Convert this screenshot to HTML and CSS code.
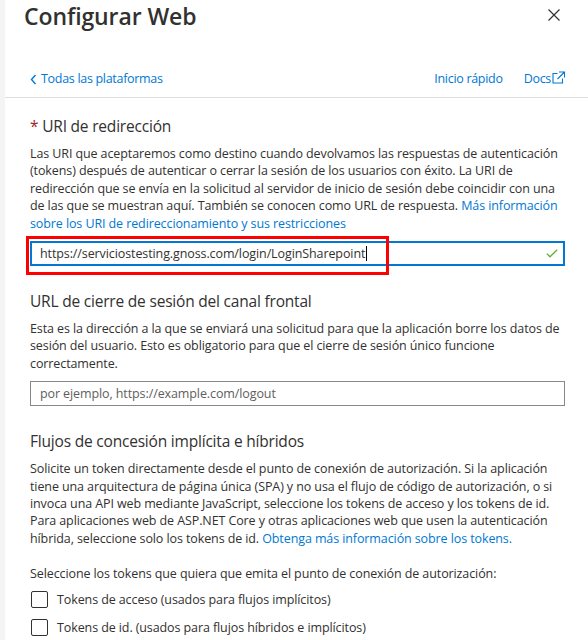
FILE: index.html
```html
<!DOCTYPE html>
<html lang="es">
<head>
<meta charset="utf-8">
<title>Configurar Web</title>
<link rel="stylesheet" href="styles.css">
</head>
<body>
<div class="panel">
  <header class="head">
    <div class="title-row">
      <h1 class="title">Configurar Web</h1>
      <button class="close" aria-label="Cerrar">
        <svg width="12" height="12" viewBox="0 0 12 12"><path d="M0.5 0.5 L11.5 11.5 M11.5 0.5 L0.5 11.5" stroke="#323130" stroke-width="1.2" fill="none"/></svg>
      </button>
    </div>
    <nav class="nav">
      <a class="back" href="#">
        <svg width="7" height="11" viewBox="0 0 7 11"><path d="M5.5 1 L1.5 5.5 L5.5 10" stroke="#0078d4" stroke-width="1.4" fill="none"/></svg>
        Todas las plataformas
      </a>
      <div class="nav-links">
        <a href="#">Inicio rápido</a>
        <a href="#" class="docs">Docs<svg width="14" height="13" viewBox="0 0 14 13"><path d="M5.5 2.5 H1 V12 H10.5 V7.5" stroke="#0078d4" stroke-width="1.1" fill="none"/><path d="M7 1 H12.5 V6.5 M12.5 1 L5.5 8" stroke="#0078d4" stroke-width="1.1" fill="none"/></svg></a>
      </div>
    </nav>
  </header>

  <main class="content">
    <section class="section first">
      <h2 class="heading"><span class="req">*</span> URI de redirección</h2>
      <p class="desc">Las URI que aceptaremos como destino cuando devolvamos las respuestas de autenticación (tokens) después de autenticar o cerrar la sesión de los usuarios con éxito. La URI de redirección que se envía en la solicitud al servidor de inicio de sesión debe coincidir con una de las que se muestran aquí. También se conocen como URL de respuesta. <a href="#">Más información sobre los URI de redireccionamiento y sus restricciones</a></p>
      <div class="field focused">
        <span class="value">https://serviciostesting.gnoss.com/login/LoginSharepoint<span class="caret"></span></span>
        <svg class="ok" width="12" height="9" viewBox="0 0 12 9"><path d="M0.8 4.6 L4 7.8 L11.2 0.8" stroke="#5db32a" stroke-width="1.3" fill="none"/></svg>
        <span class="highlight"></span>
      </div>
    </section>

    <section class="section">
      <h2 class="heading">URL de cierre de sesión del canal frontal</h2>
      <p class="desc">Esta es la dirección a la que se enviará una solicitud para que la aplicación borre los datos de sesión del usuario. Esto es obligatorio para que el cierre de sesión único funcione correctamente.</p>
      <div class="field">
        <span class="placeholder">por ejemplo, https://example.com/logout</span>
      </div>
    </section>

    <section class="section">
      <h2 class="heading">Flujos de concesión implícita e híbridos</h2>
      <p class="desc">Solicite un token directamente desde el punto de conexión de autorización. Si la aplicación tiene una arquitectura de página única (SPA) y no usa el flujo de código de autorización, o si invoca una API web mediante JavaScript, seleccione los tokens de acceso y los tokens de id. Para aplicaciones web de ASP.NET Core y otras aplicaciones web que usen la autenticación híbrida, seleccione solo los tokens de id. <a href="#">Obtenga más información sobre los tokens.</a></p>
      <p class="desc select">Seleccione los tokens que quiera que emita el punto de conexión de autorización:</p>
      <label class="check"><span class="box"></span>Tokens de acceso (usados para flujos implícitos)</label>
      <label class="check"><span class="box"></span>Tokens de id. (usados para flujos híbridos e implícitos)</label>
    </section>
  </main>
</div>
</body>
</html>
```

FILE: styles.css
```css
* { box-sizing: border-box; }
html, body { margin: 0; padding: 0; background: #fff; }
body {
  font-family: "Open Sans", "Noto Sans", sans-serif;
  color: #323130;
  width: 588px;
  height: 640px;
  overflow: hidden;
}
a { color: #0078d4; text-decoration: none; }

.panel {
  border-left: 5px solid #f4f4f4;
  min-height: 640px;
}

.head {
  border-bottom: 1px solid #e1dfdd;
}
.title-row {
  display: flex;
  align-items: flex-start;
  justify-content: space-between;
  padding-left: 19px;
  padding-right: 28px;
}
.title {
  margin: 0;
  font-size: 23px;
  font-weight: 600;
  line-height: 32px;
  letter-spacing: -0.1px;
  color: #323130;
}
.close {
  border: 0;
  background: none;
  padding: 0;
  margin-top: 9px;
  width: 12px;
  height: 12px;
  display: block;
}
.close svg { display: block; }

.nav {
  display: flex;
  justify-content: space-between;
  align-items: center;
  margin-top: 38px;
  padding: 0 22px 9px 25px;
  font-size: 12.5px;
  line-height: 18px;
  letter-spacing: -0.3px;
}
.back { display: flex; align-items: center; gap: 4px; }
.nav-links { display: flex; gap: 21px; }
.docs { display: flex; align-items: center; }
.docs svg { margin-left: 1px; margin-top: -3px; }

.content {
  padding: 0 23px 0 25px;
}
.section { margin-top: 24px; }
.section.first { margin-top: 17px; }

.heading {
  margin: 0;
  font-size: 15.5px;
  font-weight: 400;
  line-height: 22px;
  letter-spacing: -0.2px;
  color: #323130;
}
.req { color: #a4262c; }

.desc {
  margin: 8px 0 0;
  font-size: 12.5px;
  line-height: 17.4px;
  letter-spacing: -0.1px;
  color: #323130;
}
.desc.select { margin-top: 18px; }

.field {
  position: relative;
  margin-top: 9px;
  height: 25px;
  border: 1px solid #8a8886;
  display: flex;
  align-items: center;
  padding: 0 9px;
  font-size: 12.5px;
  letter-spacing: -0.1px;
}
.field.focused {
  border: 2px solid #0078d4;
  padding: 0 8px;
}
.value { flex: 1; color: #323130; display: flex; align-items: center; }
.caret {
  display: inline-block;
  width: 1px;
  height: 15px;
  background: #000;
  margin-left: 1px;
}
.ok { margin-right: -3px; }
.placeholder { color: #605e5c; }
.highlight {
  position: absolute;
  left: -6px;
  top: -7px;
  width: 363px;
  height: 39px;
  border: 3px solid #ff0000;
  pointer-events: none;
}

.check {
  display: flex;
  align-items: center;
  gap: 9px;
  margin-top: 8px;
  font-size: 12.5px;
  line-height: 18px;
  letter-spacing: -0.1px;
}
.check + .check { margin-top: 10px; }
.box {
  width: 17px;
  height: 17px;
  border: 1px solid #323130;
  border-radius: 2px;
  margin-left: 1px;
  flex: none;
}
```
